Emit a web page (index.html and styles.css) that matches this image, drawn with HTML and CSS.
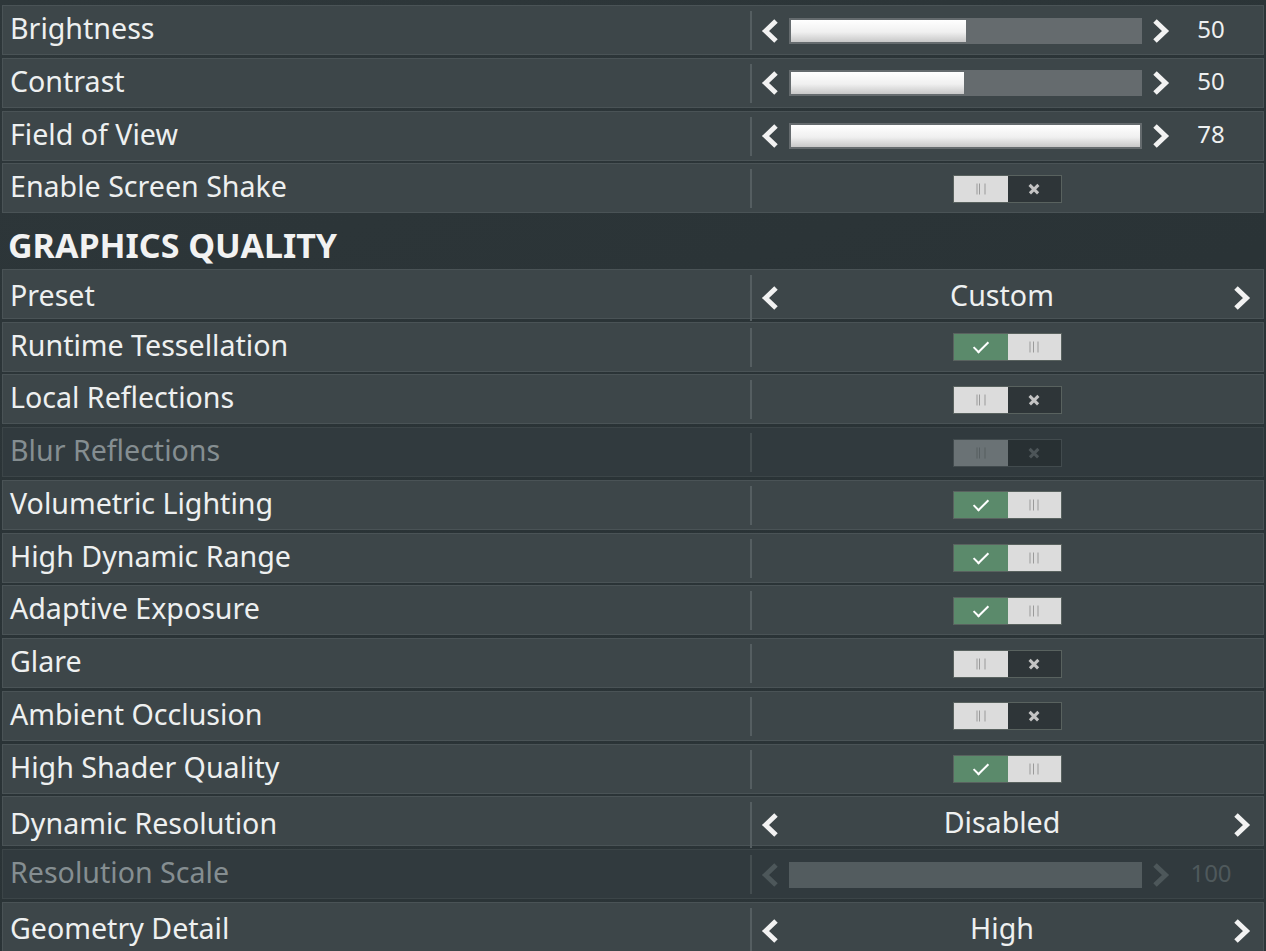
FILE: index.html
```html
<!DOCTYPE html>
<html lang="en-US">
<head>
    <meta charset="UTF-8">
    <title>Video Settings</title>
    <link rel="stylesheet" href="styles.css">
</head>
<body>
    <div class="settings">
        <div class="row">
            <div class="label">Brightness</div>
            <div class="control slider">
                <svg class="arrow" viewBox="0 0 18 24"><path d="M15 2 L4.5 12 L15 22"/></svg>
                <div class="track"><div class="fill" style="width: 50%"></div></div>
                <svg class="arrow" viewBox="0 0 18 24"><path d="M3 2 L13.5 12 L3 22"/></svg>
                <span class="value">50</span>
            </div>
        </div>
        <div class="row">
            <div class="label">Contrast</div>
            <div class="control slider">
                <svg class="arrow" viewBox="0 0 18 24"><path d="M15 2 L4.5 12 L15 22"/></svg>
                <div class="track"><div class="fill" style="width: 49.5%"></div></div>
                <svg class="arrow" viewBox="0 0 18 24"><path d="M3 2 L13.5 12 L3 22"/></svg>
                <span class="value">50</span>
            </div>
        </div>
        <div class="row">
            <div class="label">Field of View</div>
            <div class="control slider">
                <svg class="arrow" viewBox="0 0 18 24"><path d="M15 2 L4.5 12 L15 22"/></svg>
                <div class="track"><div class="fill" style="width: 100%"></div></div>
                <svg class="arrow" viewBox="0 0 18 24"><path d="M3 2 L13.5 12 L3 22"/></svg>
                <span class="value">78</span>
            </div>
        </div>
        <div class="row">
            <div class="label">Enable Screen Shake</div>
            <div class="control">
                <div class="toggle off"><span class="grip"></span><span class="cross"></span></div>
            </div>
        </div>

        <h2 class="section">GRAPHICS QUALITY</h2>

        <div class="row">
            <div class="label">Preset</div>
            <div class="control select">
                <svg class="arrow" viewBox="0 0 18 24"><path d="M15 2 L4.5 12 L15 22"/></svg>
                <span class="choice">Custom</span>
                <svg class="arrow" viewBox="0 0 18 24"><path d="M3 2 L13.5 12 L3 22"/></svg>
            </div>
        </div>
        <div class="row">
            <div class="label">Runtime Tessellation</div>
            <div class="control">
                <div class="toggle on"><span class="check"></span><span class="grip"></span></div>
            </div>
        </div>
        <div class="row">
            <div class="label">Local Reflections</div>
            <div class="control">
                <div class="toggle off"><span class="grip"></span><span class="cross"></span></div>
            </div>
        </div>
        <div class="row disabled">
            <div class="label">Blur Reflections</div>
            <div class="control">
                <div class="toggle off"><span class="grip"></span><span class="cross"></span></div>
            </div>
        </div>
        <div class="row">
            <div class="label">Volumetric Lighting</div>
            <div class="control">
                <div class="toggle on"><span class="check"></span><span class="grip"></span></div>
            </div>
        </div>
        <div class="row">
            <div class="label">High Dynamic Range</div>
            <div class="control">
                <div class="toggle on"><span class="check"></span><span class="grip"></span></div>
            </div>
        </div>
        <div class="row">
            <div class="label">Adaptive Exposure</div>
            <div class="control">
                <div class="toggle on"><span class="check"></span><span class="grip"></span></div>
            </div>
        </div>
        <div class="row">
            <div class="label">Glare</div>
            <div class="control">
                <div class="toggle off"><span class="grip"></span><span class="cross"></span></div>
            </div>
        </div>
        <div class="row">
            <div class="label">Ambient Occlusion</div>
            <div class="control">
                <div class="toggle off"><span class="grip"></span><span class="cross"></span></div>
            </div>
        </div>
        <div class="row">
            <div class="label">High Shader Quality</div>
            <div class="control">
                <div class="toggle on"><span class="check"></span><span class="grip"></span></div>
            </div>
        </div>
        <div class="row">
            <div class="label">Dynamic Resolution</div>
            <div class="control select">
                <svg class="arrow" viewBox="0 0 18 24"><path d="M15 2 L4.5 12 L15 22"/></svg>
                <span class="choice">Disabled</span>
                <svg class="arrow" viewBox="0 0 18 24"><path d="M3 2 L13.5 12 L3 22"/></svg>
            </div>
        </div>
        <div class="row disabled">
            <div class="label">Resolution Scale</div>
            <div class="control slider">
                <svg class="arrow" viewBox="0 0 18 24"><path d="M15 2 L4.5 12 L15 22"/></svg>
                <div class="track"></div>
                <svg class="arrow" viewBox="0 0 18 24"><path d="M3 2 L13.5 12 L3 22"/></svg>
                <span class="value">100</span>
            </div>
        </div>
        <div class="row">
            <div class="label">Geometry Detail</div>
            <div class="control select">
                <svg class="arrow" viewBox="0 0 18 24"><path d="M15 2 L4.5 12 L15 22"/></svg>
                <span class="choice">High</span>
                <svg class="arrow" viewBox="0 0 18 24"><path d="M3 2 L13.5 12 L3 22"/></svg>
            </div>
        </div>
    </div>
</body>
</html>
```

FILE: styles.css
```css
:root {
    --ui-font: "Noto Sans", "Open Sans", "DejaVu Sans", sans-serif;
    --bg: #2b3437;
    --row-bg: #3d4649;
    --row-border: #4a5356;
    --text: #eef0f0;
    --dim-text: #858e91;
}

* {
    margin: 0;
    padding: 0;
    box-sizing: border-box;
}

html, body {
    height: 100%;
}

body {
    font-family: var(--ui-font);
    color: var(--text);
    background: linear-gradient(160deg, #2e373a 0%, #2a3336 50%, #2c3538 100%);
    overflow: hidden;
}

.settings {
    padding: 5px 2px 0;
}

.row {
    display: grid;
    grid-template-columns: 747px 1fr;
    height: 50px;
    margin-bottom: 2.75px;
    background-color: var(--row-bg);
    border: 1px solid var(--row-border);
}

.label {
    display: flex;
    align-items: center;
    padding: 0 0 3px 7px;
    font-size: 28.6px;
    line-height: 1;
}

.control {
    display: flex;
    align-items: center;
    justify-content: center;
    margin: 5px 0 4px;
    border-left: 2px solid #555e61;
}

.arrow {
    width: 18px;
    height: 24px;
    flex: none;
}

.arrow path {
    fill: none;
    stroke: #f2f2f2;
    stroke-width: 5;
}

.slider {
    justify-content: flex-start;
    padding: 0 11px 0 9px;
}

.track {
    flex: 1;
    height: 26px;
    margin: 0 10px;
    padding: 2px;
    background-color: #656b6e;
}

.fill {
    height: 100%;
    background: linear-gradient(#ffffff, #f0f0f0 55%, #c8c8c8);
}

.value {
    width: 82px;
    padding-bottom: 5px;
    text-align: center;
    font-size: 24px;
}

.select {
    justify-content: space-between;
    padding: 0 12px 0 9px;
}

.choice {
    flex: 1;
    padding: 0 8px 7px 0;
    text-align: center;
    font-size: 28.6px;
}

.toggle {
    display: flex;
    width: 109px;
    height: 28px;
    border: 1px solid #59625f;
}

.toggle span {
    position: relative;
    flex: 1;
}

.grip {
    background-color: #dcdcdc;
}

.grip::before {
    content: "";
    position: absolute;
    left: 50%;
    top: 50%;
    width: 7px;
    height: 11px;
    transform: translate(-50%, -50%);
    border-left: 1px solid #9a9a9a;
    border-right: 1px solid #9a9a9a;
    background: linear-gradient(90deg, transparent 2px, #9a9a9a 2px, #9a9a9a 3px, transparent 3px);
}

.cross {
    background-color: #2e3538;
}

.cross::before,
.cross::after {
    content: "";
    position: absolute;
    left: 50%;
    top: 50%;
    width: 12px;
    height: 2.5px;
    background-color: #c4c4c4;
    transform: translate(-50%, -50%) rotate(45deg);
}

.cross::after {
    transform: translate(-50%, -50%) rotate(-45deg);
}

.check {
    background-color: #5b8a6b;
}

.check::before {
    content: "";
    position: absolute;
    left: 50%;
    top: 50%;
    width: 13px;
    height: 6px;
    border-left: 2.5px solid #ffffff;
    border-bottom: 2.5px solid #ffffff;
    transform: translate(-50%, -70%) rotate(-45deg);
}

.section {
    display: flex;
    align-items: flex-end;
    height: 50px;
    padding: 0 0 4px 6px;
    margin-bottom: 2.75px;
    font-size: 34px;
    font-weight: 700;
    line-height: 1;
    color: #f2f2f2;
}

/* greyed-out rows */
.disabled {
    background-color: #313a3e;
    border-color: #3c4548;
}

.disabled .label {
    color: var(--dim-text);
}

.disabled .control {
    border-left-color: #444d50;
}

.disabled .arrow path {
    stroke: #4d575a;
}

.disabled .value {
    color: #4f595c;
}

.disabled .track {
    background-color: #535c5f;
}

.disabled .grip {
    background-color: #6a7275;
}

.disabled .grip::before {
    border-color: #565e61;
    background: linear-gradient(90deg, transparent 2px, #565e61 2px, #565e61 3px, transparent 3px);
}

.disabled .cross {
    background-color: #283033;
}

.disabled .cross::before,
.disabled .cross::after {
    background-color: #4d5558;
}

.disabled .toggle {
    border-color: #424b4e;
}
```
